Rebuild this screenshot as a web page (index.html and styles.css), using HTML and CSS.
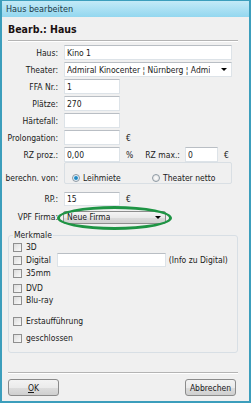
FILE: index.html
```html
<!DOCTYPE html>
<html lang="de">
<head>
  <meta charset="UTF-8" />
  <title>Haus bearbeiten</title>
  <link rel="stylesheet" href="styles.css">
</head>
<body>
  <div class="window">
    <div class="titlebar">Haus bearbeiten</div>
    <div class="content">
      <h1 class="heading">Bearb.: Haus</h1>
      <div class="sep"></div>

      <div class="form">
        <div class="row">
          <label class="lbl">Haus:</label>
          <input class="field wide" type="text" value="Kino 1">
        </div>
        <div class="row">
          <label class="lbl">Theater:</label>
          <div class="field wide combo">
            <span class="combo-text">Admiral Kinocenter ¦ Nürnberg ¦ Admi</span>
            <span class="arrow"></span>
          </div>
        </div>
        <div class="row">
          <label class="lbl">FFA Nr.:</label>
          <input class="field short" type="text" value="1">
        </div>
        <div class="row">
          <label class="lbl">Plätze:</label>
          <input class="field short" type="text" value="270">
        </div>
        <div class="row">
          <label class="lbl">Härtefall:</label>
          <input class="field short" type="text" value="">
        </div>
        <div class="row">
          <label class="lbl">Prolongation:</label>
          <input class="field short" type="text" value="">
          <span class="unit">€</span>
        </div>
        <div class="row row-rz">
          <label class="lbl">RZ proz.:</label>
          <input class="field short" type="text" value="0,00">
          <span class="unit">%</span>
          <label class="lbl-inline">RZ max.:</label>
          <input class="field tiny" type="text" value="0">
          <span class="unit">€</span>
        </div>

        <div class="row-group">
          <label class="lbl lbl-group">berechn. von:</label>
          <div class="groupbox">
            <div class="radio-item"><span class="radio checked"></span><span>Leihmiete</span></div>
            <div class="radio-item"><span class="radio"></span><span>Theater netto</span></div>
          </div>
        </div>

        <div class="row row-rp">
          <label class="lbl">RP.:</label>
          <input class="field short" type="text" value="15">
          <span class="unit">€</span>
        </div>
        <div class="row row-vpf">
          <label class="lbl">VPF Firma:</label>
          <div class="vpf">
            <div class="button-combo">
              <span class="combo-text">Neue Firma</span>
              <span class="arrow"></span>
            </div>
            <div class="mark"></div>
          </div>
        </div>
      </div>

      <fieldset class="features">
        <legend>Merkmale</legend>
        <div class="check-row c-3d"><span class="check"></span>3D</div>
        <div class="check-row c-digital"><span class="check"></span>Digital
          <input class="field digital-info" type="text" value="">
          <span class="hint">(Info zu Digital)</span>
        </div>
        <div class="check-row"><span class="check"></span>35mm</div>
        <div class="check-row c-dvd"><span class="check"></span>DVD</div>
        <div class="check-row"><span class="check"></span>Blu-ray</div>
        <div class="check-row c-erst"><span class="check"></span>Erstaufführung</div>
        <div class="check-row c-geschl"><span class="check"></span>geschlossen</div>
      </fieldset>

      <div class="sep sep-bottom"></div>
      <div class="buttons">
        <button class="btn"><u>O</u>K</button>
        <button class="btn">Abbrechen</button>
      </div>
    </div>
  </div>
</body>
</html>
```

FILE: styles.css
```css
* {
  box-sizing: border-box;
}

body {
  margin: 0;
  font-family: Tahoma, "DejaVu Sans Condensed", "DejaVu Sans", sans-serif;
  font-stretch: condensed;
  font-size: 8.5px;
  color: #1a1a1a;
}

.window {
  width: 251px;
  height: 403px;
  border: 2px solid #3c9ebc;
  border-top-width: 1px;
  background: #f0f0f0;
}

.titlebar {
  height: 16px;
  line-height: 16px;
  padding-left: 4px;
  background: linear-gradient(#c3eaf7, #93d7ef);
  color: #1d3a48;
  font-size: 9px;
}

.content {
  padding: 0 11px 0 0;
}

.heading {
  margin: 5px 0 0 6px;
  height: 14px;
  line-height: 14px;
  font-size: 10.5px;
  font-weight: bold;
  color: #1a1010;
}

.sep {
  margin: 4px 0 0 6px;
  height: 2px;
  border-top: 1px solid #b4b4b4;
  border-bottom: 1px solid #ffffff;
}

.form {
  margin-top: 3px;
}

.row {
  display: flex;
  align-items: center;
  height: 15px;
  margin-bottom: 2px;
}

.lbl {
  flex: none;
  width: 56px;
  margin-right: 6px;
  text-align: right;
  white-space: nowrap;
}

.field {
  flex: none;
  height: 15px;
  padding: 0 2px;
  border: 1px solid #dde3e8;
  border-top-color: #b9bec4;
  background: #ffffff;
  font: inherit;
  color: inherit;
  outline: none;
}

.wide {
  width: 168px;
}

.short {
  width: 56px;
}

.tiny {
  width: 33px;
}

.combo {
  display: flex;
  align-items: center;
  justify-content: space-between;
}

.combo-text {
  white-space: nowrap;
  overflow: hidden;
}

.arrow {
  width: 0;
  height: 0;
  margin-right: 2px;
  border-left: 3px solid transparent;
  border-right: 3px solid transparent;
  border-top: 3px solid #000000;
}

.unit {
  margin-left: 6px;
}

.row-rz {
  margin-bottom: 0;
}

.lbl-inline {
  margin-left: 12px;
  margin-right: 5px;
}

.row-group {
  display: flex;
  align-items: flex-end;
}

.lbl-group {
  line-height: 10px;
  padding-bottom: 1px;
}

.groupbox {
  display: grid;
  grid-template-columns: 80px 80px;
  flex: none;
  width: 168px;
  height: 22px;
  padding: 10px 0 0 7px;
  border: 1px solid #d9dfe4;
  border-radius: 2px;
  line-height: 10px;
}

.radio-item {
  display: flex;
  align-items: center;
  white-space: nowrap;
}

.radio {
  flex: none;
  width: 8px;
  height: 8px;
  margin-right: 3px;
  border: 1px solid #8e9aa4;
  border-radius: 50%;
  background: radial-gradient(#ffffff, #dcdcdc);
}

.radio.checked {
  background: radial-gradient(circle, #1f6c9c 0, #3aa0d8 1.6px, #e8f3fa 2.4px, #dcdcdc 4px);
}

.row-rp {
  margin-top: 8px;
  height: 14px;
  margin-bottom: 4px;
}

.row-rp .field {
  height: 14px;
}

.row-vpf {
  height: 14px;
}

.vpf {
  position: relative;
  margin-left: -1px;
}

.button-combo {
  display: flex;
  align-items: center;
  justify-content: space-between;
  width: 103px;
  height: 13px;
  padding: 0 2px 0 3px;
  border: 1px solid #8e8e8e;
  border-radius: 2px;
  background: linear-gradient(#f4f4f4, #e9e9e9 50%, #dcdcdc 51%, #cfcfcf);
}

.mark {
  position: absolute;
  left: -6px;
  top: -5px;
  width: 115px;
  height: 24px;
  border: 3px solid #1e9444;
  border-radius: 50%;
}

.features {
  margin: 6px 0 0 6px;
  padding: 0 4px 8px;
  border: 1px solid #d8dfe5;
  border-radius: 3px;
}

.features legend {
  padding: 0 1px;
  line-height: 10px;
}

.check-row {
  display: flex;
  align-items: center;
  height: 12px;
}

.c-3d {
  margin-top: 1px;
}

.c-digital {
  height: 14px;
}

.c-dvd {
  margin-top: 3px;
}

.c-erst {
  margin-top: 9px;
}

.c-geschl {
  margin-top: 5px;
}

.check {
  flex: none;
  width: 9px;
  height: 9px;
  margin-right: 4px;
  border: 1px solid #8f8f8f;
  background: linear-gradient(135deg, #dcdcdc, #fafafa);
}

.digital-info {
  width: 109px;
  height: 14px;
  margin-left: 6px;
}

.hint {
  margin-left: 3px;
}

.sep-bottom {
  margin-top: 19px;
}

.buttons {
  display: flex;
  justify-content: space-between;
  margin: 5px 0 0 6px;
  padding-right: 2px;
}

.btn {
  width: 51px;
  height: 17px;
  padding: 0;
  border: 1px solid #8b8b8b;
  border-radius: 3px;
  background: linear-gradient(#f3f3f3, #ebebeb 50%, #dddddd 51%, #cfcfcf);
  font: inherit;
  color: inherit;
}
```
